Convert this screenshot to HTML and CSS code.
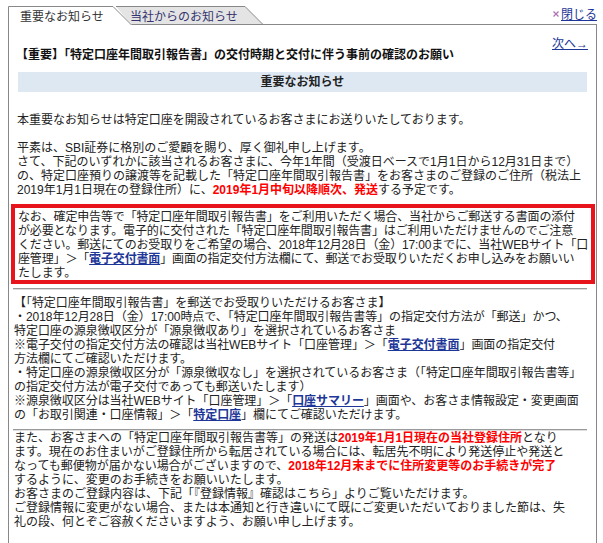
FILE: index.html
```html
<!DOCTYPE html>
<html lang="ja">
<head>
<meta charset="utf-8">
<title>重要なお知らせ</title>
<link rel="stylesheet" href="styles.css">
</head>
<body>
<div class="page">
  <div class="topbar">
    <div class="tabs">
      <svg class="tab-shape" width="255" height="19" viewBox="0 0 255 19">
        <polygon points="108,0.5 237,0.5 255,18.5 123,18.5" fill="#e4e4e4"/>
        <polyline points="108,0.5 237,0.5 255,18.5" fill="none" stroke="#888"/>
        <line x1="122" y1="18.5" x2="255" y2="18.5" stroke="#888"/>
        <polygon points="0,0 105,0 124,19 0,19" fill="#fff"/>
        <polyline points="0.5,19 0.5,0.5 105,0.5 123.5,19" fill="none" stroke="#888"/>
      </svg>
      <span class="tab tab-active">重要なお知らせ</span>
      <span class="tab tab-other">当社からのお知らせ</span>
    </div>
    <div class="topfill">
      <a class="close" href="#"><svg class="close-icon" width="6" height="6" viewBox="0 0 6 6"><path d="M0.5 0.5 L5.5 5.5 M5.5 0.5 L0.5 5.5" stroke="#b070b4" stroke-width="1.2"/></svg>閉じる</a>
    </div>
  </div>

  <div class="box">
    <div class="next-row"><a class="link" href="#">次へ→</a></div>
    <div class="title">【重要】「特定口座年間取引報告書」の交付時期と交付に伴う事前の確認のお願い</div>
    <div class="bar">重要なお知らせ</div>

    <div class="intro">
      本重要なお知らせは特定口座を開設されているお客さまにお送りいたしております。<br>
      <br>
      平素は、SBI証券に格別のご愛顧を賜り、厚く御礼申し上げます。<br>
      さて、下記のいずれかに該当されるお客さまに、今年1年間（受渡日ベースで1月1日から12月31日まで）<br>
      の、特定口座預りの譲渡等を記載した「特定口座年間取引報告書」をお客さまのご登録のご住所（税法上<br>
      2019年1月1日現在の登録住所）に、<span class="red">2019年1月中旬以降順次、発送</span>する予定です。
    </div>

    <div class="notice">
      なお、確定申告等で「特定口座年間取引報告書」をご利用いただく場合、当社からご郵送する書面の添付<br>
      が必要となります。電子的に交付された「特定口座年間取引報告書」はご利用いただけませんのでご注意<br>
      ください。郵送にてのお受取りをご希望の場合、2018年12月28日（金）17:00までに、当社WEBサイト「口<br>
      座管理」＞「<a class="link strong" href="#">電子交付書面</a>」画面の指定交付方法欄にて、郵送でお受取りいただくお申し込みをお願いい<br>
      たします。
    </div>

    <div class="rule"></div>

    <div class="sec3">
      【「特定口座年間取引報告書」を郵送でお受取りいただけるお客さま】<br>
      ・2018年12月28日（金）17:00時点で、「特定口座年間取引報告書等」の指定交付方法が「郵送」かつ、<br>
      特定口座の源泉徴収区分が「源泉徴収あり」を選択されているお客さま<br>
      ※電子交付の指定交付方法の確認は当社WEBサイト「口座管理」＞「<a class="link strong" href="#">電子交付書面</a>」画面の指定交付<br>
      方法欄にてご確認いただけます。<br>
      ・特定口座の源泉徴収区分が「源泉徴収なし」を選択されているお客さま（「特定口座年間取引報告書等」<br>
      の指定交付方法が電子交付であっても郵送いたします）<br>
      ※源泉徴収区分は当社WEBサイト「口座管理」＞「<a class="link strong" href="#">口座サマリー</a>」画面や、お客さま情報設定・変更画面<br>
      の「お取引関連・口座情報」＞「<a class="link strong" href="#">特定口座</a>」欄にてご確認いただけます。
    </div>

    <div class="rule rule-tight"></div>

    <div class="sec4">
      また、お客さまへの「特定口座年間取引報告書等」の発送は<span class="red">2019年1月1日現在の当社登録住所</span>となり<br>
      ます。現在のお住まいがご登録住所から転居されている場合には、転居先不明により発送停止や発送と<br>
      なっても郵便物が届かない場合がございますので、<span class="red">2018年12月末までに住所変更等のお手続きが完了</span><br>
      するように、変更のお手続きをお願いいたします。<br>
      お客さまのご登録内容は、下記「『登録情報』確認はこちら」よりご覧いただけます。<br>
      ご登録情報に変更がない場合、または本通知と行き違いにて既にご変更いただいておりました節は、失<br>
      礼の段、何とぞご容赦くださいますよう、お願い申し上げます。
    </div>
  </div>
</div>
</body>
</html>
```

FILE: styles.css
```css
html, body {
  margin: 0;
  padding: 0;
  background: #fff;
}

body {
  font-family: "Liberation Sans", "Noto Sans CJK JP", sans-serif;
  font-size: 12px;
  line-height: 14px;
  color: #222;
}

.page {
  margin: 6px 6px 0 8px;
  width: 589px;
}

/* ---------- tab bar ---------- */
.topbar {
  display: flex;
  height: 19px;
}

.tabs {
  position: relative;
  flex: none;
  width: 255px;
  height: 19px;
  display: flex;
}

.tab-shape {
  position: absolute;
  left: 0;
  top: 0;
  display: block;
}

.tab {
  position: relative;
  padding-top: 4px;
  line-height: 14px;
  white-space: nowrap;
}

.tab-active {
  width: 122px;
  padding-left: 12px;
  box-sizing: border-box;
  color: #333;
}

.tab-other {
  color: #34346e;
}

.topfill {
  flex: 1;
  height: 18px;
  border-bottom: 1px solid #888;
  display: flex;
  justify-content: flex-end;
  align-items: flex-end;
}

.close {
  color: #1d3697;
  text-decoration: underline;
  line-height: 14px;
  margin-bottom: 2px;
  white-space: nowrap;
}

.close-icon {
  display: inline-block;
  vertical-align: 2px;
  margin-right: 2px;
}

/* ---------- main box ---------- */
.box {
  border: 1px solid #888;
  border-top: 0;
  padding: 12px 0 30px;
}

.link {
  color: #1d3697;
  text-decoration: underline;
}

.strong {
  font-weight: bold;
}

.red {
  color: #ff0000;
  font-weight: bold;
}

.next-row {
  height: 11px;
  text-align: right;
  padding-right: 8px;
}

.title {
  font-weight: bold;
  color: #111;
  padding-left: 7px;
  white-space: nowrap;
}

.bar {
  margin: 10px 9px 0 9px;
  height: 20px;
  line-height: 20px;
  background: #dde8f3;
  text-align: center;
  font-weight: bold;
  color: #222;
}

.intro {
  margin-top: 21px;
  padding-left: 8px;
  white-space: nowrap;
}

.notice {
  margin: 7px 1px 0 2px;
  border: 4px solid #e8141c;
  padding: 2px 0 0 3px;
  white-space: nowrap;
  letter-spacing: -0.15px;
}

.rule {
  margin: 4px 9px 0 4px;
  height: 0;
  border-top: 1px solid #9a9a9a;
  border-bottom: 1px solid #dedede;
}

.rule-tight {
  margin-top: 0;
}

.sec3 {
  padding: 6px 0 7px 5px;
  white-space: nowrap;
  letter-spacing: -0.05px;
}

.sec4 {
  padding-left: 5px;
  white-space: nowrap;
}
```
